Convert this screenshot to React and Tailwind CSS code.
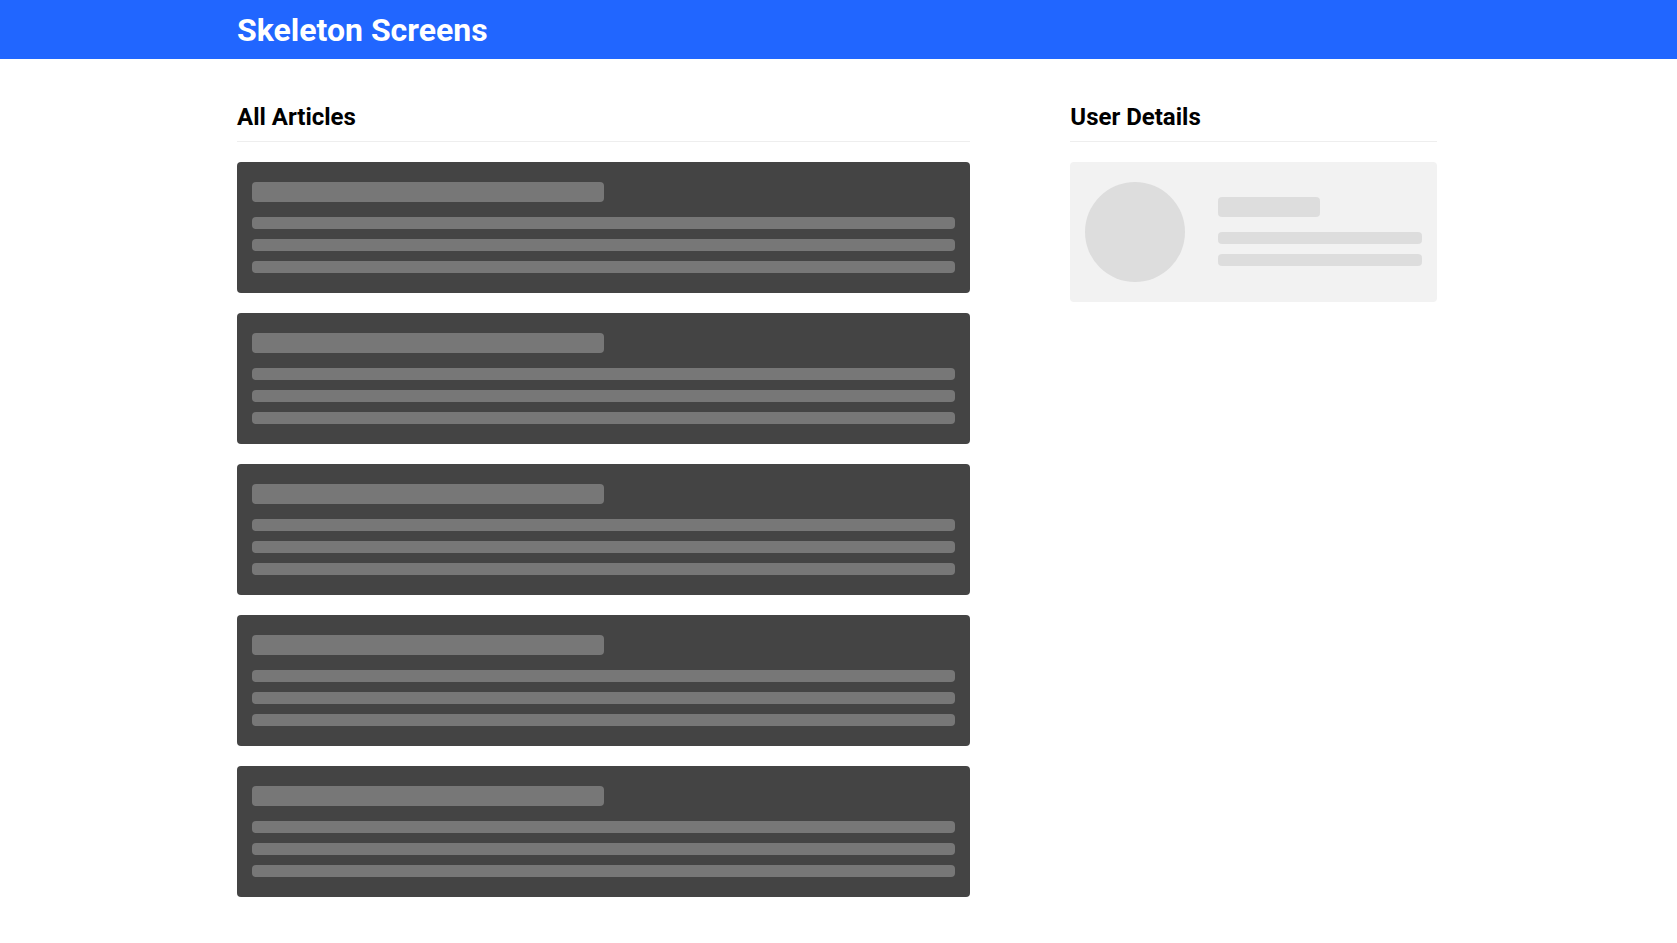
import React from "react";

function ArticleSkeleton() {
  return (
    <div className="bg-[#444444] rounded-[4px] px-[15px] py-[20px]">
      <div className="h-[20px] w-1/2 bg-[#777777] rounded-[4px] mb-[15px]" />
      <div className="h-[12px] bg-[#777777] rounded-[4px] mb-[10px]" />
      <div className="h-[12px] bg-[#777777] rounded-[4px] mb-[10px]" />
      <div className="h-[12px] bg-[#777777] rounded-[4px]" />
    </div>
  );
}

export default function App() {
  return (
    <div className="min-h-screen bg-white text-black" style={{ fontFamily: "Roboto, 'Noto Sans', sans-serif" }}>
      <header className="h-[59px] bg-[#2166ff]">
        <div className="w-[1200px] ml-[237px] h-full flex items-center pt-[1px]">
          <h1 className="text-[32px] font-bold text-white leading-none">Skeleton Screens</h1>
        </div>
      </header>
      <main className="w-[1200px] ml-[237px] grid grid-cols-[2fr_1fr] gap-[100px] pt-[41px]">
        <section>
          <h2 className="text-[24px] font-bold leading-[32px] pt-[1px] pb-[8px] border-b border-[#eeeeee] mb-[20px]">All Articles</h2>
          <div className="flex flex-col gap-[20px]">
            <ArticleSkeleton />
            <ArticleSkeleton />
            <ArticleSkeleton />
            <ArticleSkeleton />
            <ArticleSkeleton />
          </div>
        </section>
        <section>
          <h2 className="text-[24px] font-bold leading-[32px] pt-[1px] pb-[8px] border-b border-[#eeeeee] mb-[20px]">User Details</h2>
          <div className="bg-[#f2f2f2] rounded-[4px] px-[15px] py-[20px] flex items-center gap-[33px]">
            <div className="w-[100px] h-[100px] rounded-full bg-[#dddddd] shrink-0" />
            <div className="flex-1 mb-[2px]">
              <div className="h-[20px] w-1/2 bg-[#dddddd] rounded-[4px] mb-[15px]" />
              <div className="h-[12px] bg-[#dddddd] rounded-[4px] mb-[10px]" />
              <div className="h-[12px] bg-[#dddddd] rounded-[4px]" />
            </div>
          </div>
        </section>
      </main>
    </div>
  );
}
